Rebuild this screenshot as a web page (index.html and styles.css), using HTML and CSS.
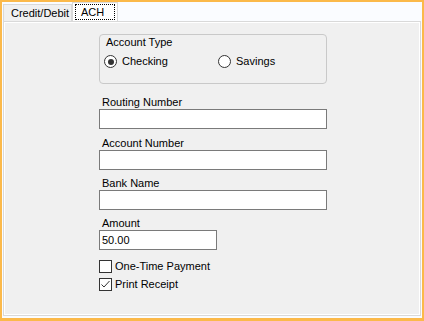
FILE: index.html
```html
<!DOCTYPE html>
<html lang="en">
<head>
    <meta charset="UTF-8">
    <link rel="stylesheet" href="styles.css">
    <title>ACH Payment</title>
</head>
<body>
    <div class="win">
        <!-- tabs -->
        <div class="tabs">
            <div class="tab">Credit/Debit</div>
            <div class="tab tab-on"><span class="focus">ACH</span></div>
        </div>
        <!-- ach page -->
        <div class="page">
            <div class="frm">
                <div class="grp">
                    <div class="grp-ttl">Account Type</div>
                    <div class="rdos">
                        <label class="rdo-row rdo-first"><span class="rdo rdo-on"></span>Checking</label>
                        <label class="rdo-row"><span class="rdo"></span>Savings</label>
                    </div>
                </div>

                <div class="fld fld-first">
                    <div class="lbl">Routing Number</div>
                    <div class="box"></div>
                </div>
                <div class="fld fld-2">
                    <div class="lbl">Account Number</div>
                    <div class="box"></div>
                </div>
                <div class="fld">
                    <div class="lbl">Bank Name</div>
                    <div class="box"></div>
                </div>
                <div class="fld">
                    <div class="lbl">Amount</div>
                    <div class="box box-sm">50.00</div>
                </div>

                <div class="chks">
                    <label class="chk"><span class="cbx"></span>One-Time Payment</label>
                    <label class="chk">
                        <span class="cbx">
                            <svg width="11" height="11" viewBox="0 0 11 11"><polyline points="1.5,5.5 4,8 9.5,2" fill="none" stroke="#333" stroke-width="1"/></svg>
                        </span>Print Receipt
                    </label>
                </div>
            </div>
        </div>
    </div>
</body>
</html>
```

FILE: styles.css
```css
*{
    margin: 0;
    padding: 0;
    box-sizing: border-box;
}
body{
    height: 321px;
    overflow: hidden;
    background-color: #fbb94a;
    font-family: "Liberation Sans", Arial, sans-serif;
    font-size: 11px;
    color: #000;
}
.win{
    margin: 2px 2px 0 2px;
    height: 316px;
    padding: 0 1px;
    background-color: #fafcff;
    display: flex;
    flex-direction: column;
}
.tabs{
    height: 19px;
    display: flex;
    align-items: flex-end;
}
.tab{
    height: 17px;
    width: 69px;
    padding: 1px 0 0 7px;
    line-height: 15px;
    border: 1px solid #d9d9d9;
    border-bottom: none;
    background-color: #f0f0f0;
}
.tab-on{
    height: 19px;
    width: 46px;
    padding: 1px 0 0 2px;
    background-color: #fff;
    border-left: 1px solid #d9d9d9;
}
.focus{
    display: block;
    width: 40px;
    height: 16px;
    padding-left: 5px;
    line-height: 14px;
    border: 1px dotted #000;
}
.page{
    height: 295px;
    border: 1px solid #d9d9d9;
    box-shadow: inset 0 0 0 1px #fff;
    background-color: #f0f0f0;
}
.frm{
    width: 228px;
    margin-left: 95px;
    padding-top: 12px;
    display: flex;
    flex-direction: column;
}
.grp{
    height: 50px;
    border: 1px solid #c9c9c9;
    border-radius: 4px;
    padding-left: 4px;
}
.grp-ttl{
    line-height: 13px;
    margin-top: 1px;
    padding-left: 2px;
}
.rdos{
    display: flex;
    margin-top: 6px;
    height: 13px;
}
.rdo-row{
    display: flex;
    align-items: center;
    gap: 5px;
    line-height: 13px;
}
.rdo-first{
    width: 114px;
}
.rdo{
    width: 13px;
    height: 13px;
    border: 1px solid #333;
    border-radius: 50%;
    background-color: #fff;
    display: flex;
    align-items: center;
    justify-content: center;
}
.rdo-on::after{
    content: "";
    width: 6px;
    height: 6px;
    border-radius: 50%;
    background-color: #333;
}
.fld{
    margin-top: 6px;
}
.fld-first{
    margin-top: 11px;
}
.fld-2{
    margin-top: 7px;
}
.lbl{
    line-height: 14px;
    padding-left: 3px;
}
.box{
    height: 20px;
    border: 1px solid #7a7a7a;
    background-color: #fff;
    padding-left: 2px;
    line-height: 18px;
}
.box-sm{
    width: 118px;
}
.chks{
    margin-top: 8px;
    display: flex;
    flex-direction: column;
    gap: 1px;
}
.chk{
    display: flex;
    align-items: center;
    gap: 3px;
    height: 17px;
    line-height: 13px;
}
.cbx{
    width: 13px;
    height: 13px;
    border: 1px solid #333;
    background-color: #fff;
    display: flex;
}
```
